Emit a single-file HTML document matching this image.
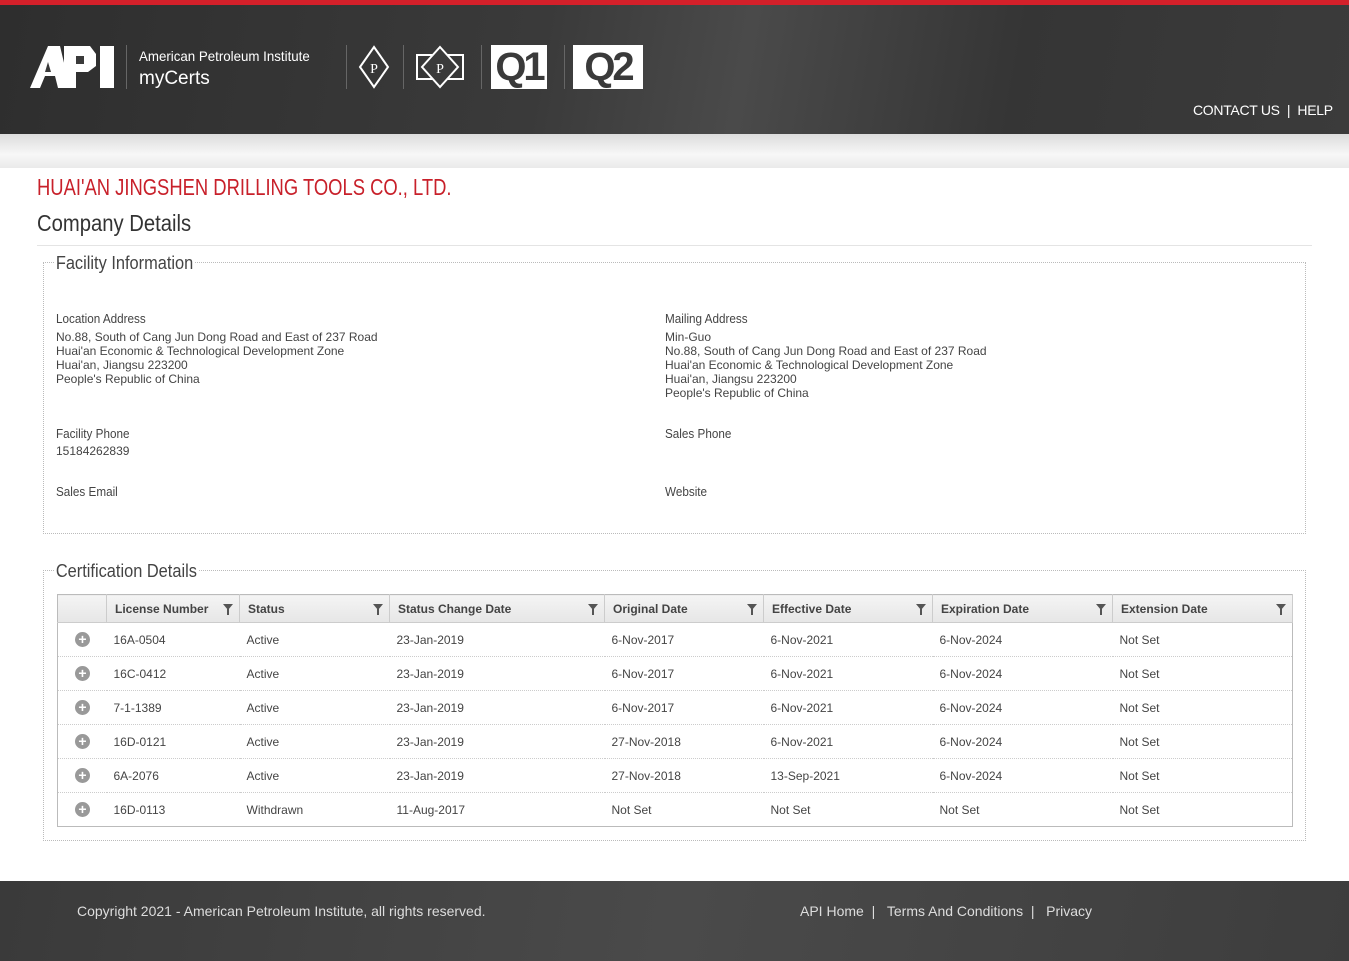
<!DOCTYPE html>
<html><head><meta charset="utf-8"><style>
*{margin:0;padding:0;box-sizing:border-box}
body{width:1349px;height:961px;background:#fff;font-family:"Liberation Sans",sans-serif;position:relative;overflow:hidden;color:#333}
.red{position:absolute;left:0;top:0;width:1349px;height:5px;background:#d4202a}
.hdr{position:absolute;left:0;top:5px;width:1349px;height:129px;background:linear-gradient(100deg,#2e2e2e 0%,#3a3a3a 40%,#4a4a4a 55%,#353535 75%,#3b3b3b 100%)}
.band{position:absolute;left:0;top:134px;width:1349px;height:34px;background:linear-gradient(#dcdcdc,#f7f7f7 60%,#eaeaea)}
.w{color:#fff;position:absolute}
.sep{position:absolute;top:45px;width:1px;height:44px;background:#666}
.abs{position:absolute}
.lbl{font-size:13px;color:#444;transform:scaleX(0.9);transform-origin:left top;white-space:nowrap}
.val{font-size:12px;color:#444;line-height:14px}
fieldset{position:absolute;border:1px dotted #bbb}
.legend{position:absolute;background:#fff;font-size:18px;color:#444;padding:0 2px;transform:scaleX(0.91);transform-origin:left top;white-space:nowrap}
table{position:absolute;left:57px;top:594px;width:1236px;border-collapse:collapse;font-size:12px;border:1px solid #bbb}
th{height:28px;background:linear-gradient(#f4f4f4,#e6e6e6);text-align:left;font-weight:bold;color:#444;padding-left:8px;border-right:1px solid #ccc;border-bottom:1px solid #ccc;position:relative}
th .f{position:absolute;right:6px;top:9px;width:0;height:0;border-left:5px solid transparent;border-right:5px solid transparent;border-top:6px solid #555}
th .f:after{content:"";position:absolute;left:-1px;top:-1px;width:2px;height:6px;background:#555}
td{height:34px;padding-left:7px;color:#444;border-bottom:1px dotted #ccc}
.pl{display:inline-block;width:15px;height:15px;border-radius:50%;background:#999;color:#fff;text-align:center;line-height:15px;font-weight:bold;font-size:14px;margin-left:17px}
.foot{position:absolute;left:0;top:881px;width:1349px;height:80px;background:linear-gradient(100deg,#3a3a3a,#4a4a4a 50%,#3d3d3d);color:#ddd;font-size:14px}
</style></head><body>
<div class="red"></div>
<div class="hdr"></div>
<div class="band"></div>
<svg class="abs" style="left:30px;top:44px" width="86" height="46" viewBox="0 0 86 46"><polygon points="0,44 18,2 30,2 40,44 28,44 25,32 15,32 10,44" fill="#fff"/><polygon points="34,2 60,2 66,10 66,22 58,28 46,28 46,44 34,44" fill="#fff"/><rect x="70" y="2" width="14" height="42" fill="#fff"/><polygon points="18,18 21,28 15,28" fill="#3a3a3a"/><rect x="46" y="12" width="8" height="8" fill="#3a3a3a"/></svg>
<div class="sep" style="left:126px"></div>
<div class="w" style="left:139px;top:48px;font-size:14px;transform:scaleX(0.95);transform-origin:left">American Petroleum Institute</div>
<div class="w" style="left:139px;top:68px;font-size:19px">myCerts</div>
<div class="sep" style="left:346px"></div>
<svg class="abs" style="left:358px;top:45px" width="32" height="46"><polygon points="16,2 30,22 16,42 2,22" fill="none" stroke="#fff" stroke-width="2"/><text x="16" y="28" fill="#fff" font-size="14" text-anchor="middle" font-family="Liberation Serif">P</text></svg>
<div class="sep" style="left:403px"></div>
<svg class="abs" style="left:414px;top:45px" width="52" height="46"><rect x="3" y="10" width="46" height="24" fill="none" stroke="#fff" stroke-width="2"/><polygon points="26,2 44,22 26,42 8,22" fill="#3a3a3a" stroke="#fff" stroke-width="2"/><text x="26" y="28" fill="#fff" font-size="14" text-anchor="middle" font-family="Liberation Serif">P</text></svg>
<div class="sep" style="left:481px"></div>
<div class="abs" style="left:491px;top:45px;width:56px;height:44px;background:#fff;color:#3a3a3a;font:bold 40px/44px 'Liberation Sans';text-align:center;letter-spacing:-3px">Q1</div>
<div class="sep" style="left:564px"></div>
<div class="abs" style="left:573px;top:45px;width:70px;height:44px;background:#fff;color:#3a3a3a;font:bold 40px/44px 'Liberation Sans';text-align:center;letter-spacing:-3px">Q2</div>
<div class="w" style="left:1193px;top:102px;font-size:14px;letter-spacing:-0.3px">CONTACT US &nbsp;| &nbsp;HELP</div>

<div class="abs" style="left:37px;top:174px;font-size:23px;color:#c8202a;transform:scaleX(0.8);transform-origin:left top;white-space:nowrap">HUAI'AN JINGSHEN DRILLING TOOLS CO., LTD.</div>
<div class="abs" style="left:37px;top:210px;font-size:23px;color:#333;transform:scaleX(0.88);transform-origin:left top;white-space:nowrap">Company Details</div>
<div class="abs" style="left:37px;top:245px;width:1275px;height:1px;background:#e4e4e4"></div>

<fieldset style="left:43px;top:262px;width:1263px;height:272px"></fieldset>
<div class="legend" style="left:54px;top:253px">Facility Information</div>
<div class="abs lbl" style="left:56px;top:311px">Location Address</div>
<div class="abs val" style="left:56px;top:330px">No.88, South of Cang Jun Dong Road and East of 237 Road<br>Huai'an Economic &amp; Technological Development Zone<br>Huai'an, Jiangsu 223200<br>People's Republic of China</div>
<div class="abs lbl" style="left:665px;top:311px">Mailing Address</div>
<div class="abs val" style="left:665px;top:330px">Min-Guo<br>No.88, South of Cang Jun Dong Road and East of 237 Road<br>Huai'an Economic &amp; Technological Development Zone<br>Huai'an, Jiangsu 223200<br>People's Republic of China</div>
<div class="abs lbl" style="left:56px;top:426px">Facility Phone</div>
<div class="abs val" style="left:56px;top:444px">15184262839</div>
<div class="abs lbl" style="left:665px;top:426px">Sales Phone</div>
<div class="abs lbl" style="left:56px;top:484px">Sales Email</div>
<div class="abs lbl" style="left:665px;top:484px">Website</div>

<fieldset style="left:43px;top:570px;width:1263px;height:271px"></fieldset>
<div class="legend" style="left:54px;top:561px">Certification Details</div>
<table>
<tr><th style="width:49px"></th><th style="width:133px">License Number<span class="f"></span></th><th style="width:150px">Status<span class="f"></span></th><th style="width:215px">Status Change Date<span class="f"></span></th><th style="width:159px">Original Date<span class="f"></span></th><th style="width:169px">Effective Date<span class="f"></span></th><th style="width:180px">Expiration Date<span class="f"></span></th><th>Extension Date<span class="f"></span></th></tr>
<tr><td style="padding:0"><span class="pl">+</span></td><td>16A-0504</td><td>Active</td><td>23-Jan-2019</td><td>6-Nov-2017</td><td>6-Nov-2021</td><td>6-Nov-2024</td><td>Not Set</td></tr>
<tr><td style="padding:0"><span class="pl">+</span></td><td>16C-0412</td><td>Active</td><td>23-Jan-2019</td><td>6-Nov-2017</td><td>6-Nov-2021</td><td>6-Nov-2024</td><td>Not Set</td></tr>
<tr><td style="padding:0"><span class="pl">+</span></td><td>7-1-1389</td><td>Active</td><td>23-Jan-2019</td><td>6-Nov-2017</td><td>6-Nov-2021</td><td>6-Nov-2024</td><td>Not Set</td></tr>
<tr><td style="padding:0"><span class="pl">+</span></td><td>16D-0121</td><td>Active</td><td>23-Jan-2019</td><td>27-Nov-2018</td><td>6-Nov-2021</td><td>6-Nov-2024</td><td>Not Set</td></tr>
<tr><td style="padding:0"><span class="pl">+</span></td><td>6A-2076</td><td>Active</td><td>23-Jan-2019</td><td>27-Nov-2018</td><td>13-Sep-2021</td><td>6-Nov-2024</td><td>Not Set</td></tr>
<tr><td style="padding:0"><span class="pl">+</span></td><td>16D-0113</td><td>Withdrawn</td><td>11-Aug-2017</td><td>Not Set</td><td>Not Set</td><td>Not Set</td><td>Not Set</td></tr>
</table>

<div class="foot">
<div class="abs" style="left:77px;top:22px">Copyright 2021 - American Petroleum Institute, all rights reserved.</div>
<div class="abs" style="left:800px;top:22px">API Home &nbsp;| &nbsp;&nbsp;Terms And Conditions &nbsp;| &nbsp;&nbsp;Privacy</div>
</div>
</body></html>
